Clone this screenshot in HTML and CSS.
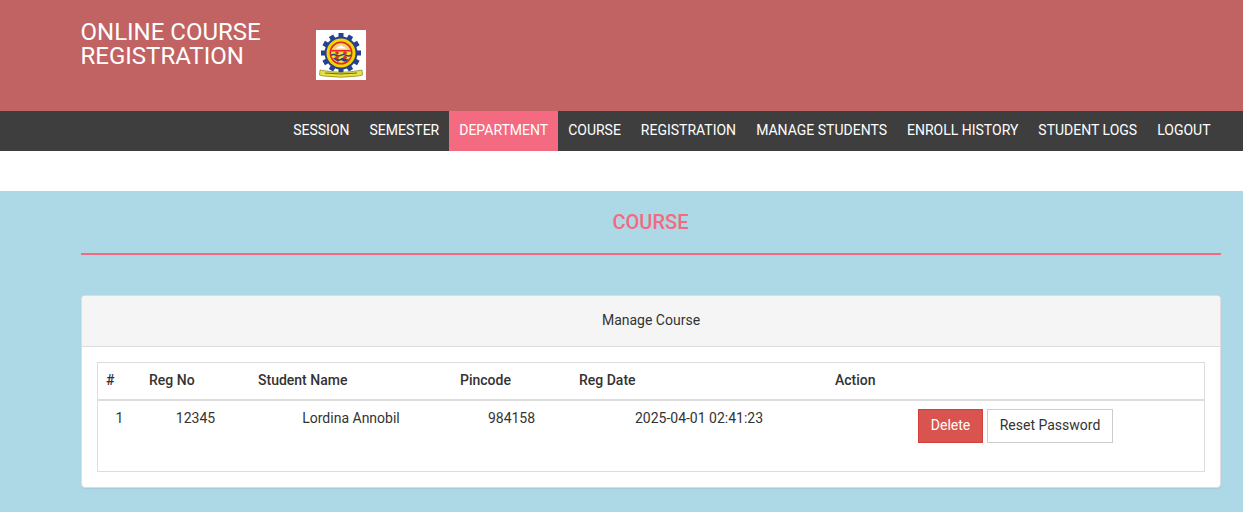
FILE: index.html
```html
<!DOCTYPE html>
<html lang="en">
<head>
<meta charset="utf-8">
<title>Online Course Registration</title>
<link rel="stylesheet" href="styles.css">
</head>
<body>
<header class="site-header">
  <h1 class="brand">ONLINE COURSE<br>REGISTRATION</h1>
  <svg class="logo" viewBox="0 0 50 50" width="50" height="50" aria-label="Logo">
    <rect width="50" height="50" fill="#fff"/>
    <g fill="#24408e">
      <circle cx="25" cy="23" r="16.500"/>
      <g id="t">
        <rect x="22.500" y="3" width="5" height="5"/>
        <rect x="22.500" y="38" width="5" height="5"/>
        <rect x="5" y="20.500" width="5" height="5"/>
        <rect x="40" y="20.500" width="5" height="5"/>
      </g>
      <use href="#t" transform="rotate(30 25 23)"/>
      <use href="#t" transform="rotate(60 25 23)"/>
    </g>
    <circle cx="25" cy="23" r="14.500" fill="#f5d400"/>
    <circle cx="25" cy="23" r="11.500" fill="#e0262a"/>
    <circle cx="25" cy="23" r="10" fill="#f7dc2c"/>
    <path d="M17 18.500q8-8 16 0z" fill="#f3c9c4"/>
    <path d="M19.500 18.500l5.500-3 5.500 3z" fill="#fff"/>
    <path d="M15.500 20h19l.5 1.500H15z" fill="#e0262a"/>
    <path d="M15 24.500q2.500-1.500 5 0t5 0 5 0 5 0v1.500q-2.500 1.500-5 0t-5 0-5 0-5 0z" fill="#24408e"/>
    <path d="M17 28.500q2-1.500 4 0t4 0 4 0 4 0l-2 2.500q-2 1.500-4 0t-4 0-2 0z" fill="#24408e"/>
    <circle cx="21" cy="23" r="1.800" fill="#c8362c"/><circle cx="29" cy="23" r="1.800" fill="#c8362c"/>
    <circle cx="21" cy="27.500" r="1.800" fill="#c8362c"/><circle cx="29" cy="27.500" r="1.800" fill="#c8362c"/>
    <path d="M4 40l3 .5q18 3.500 36 0l3-.5.500 5-4 1q-18 2.500-35 0l-4-1z" fill="#e6e23c" stroke="#6d6d1e" stroke-width=".6"/>
    <path d="M9 43q16 2 32 0" fill="none" stroke="#5c5c28" stroke-width=".9"/>
  </svg>
</header>
<nav class="main-nav">
  <a href="#">Session</a>
  <a href="#">Semester</a>
  <a href="#" class="active">Department</a>
  <a href="#">Course</a>
  <a href="#">Registration</a>
  <a href="#">Manage Students</a>
  <a href="#">Enroll History</a>
  <a href="#">Student Logs</a>
  <a href="#">Logout</a>
</nav>
<main class="content">
  <h2 class="page-title">COURSE</h2>
  <section class="panel">
    <div class="panel-heading">Manage Course</div>
    <div class="panel-body">
      <table class="data-table">
        <colgroup>
          <col class="c1"><col class="c2"><col class="c3"><col class="c4"><col class="c5"><col class="c6">
        </colgroup>
        <thead>
          <tr><th>#</th><th>Reg No</th><th>Student Name</th><th>Pincode</th><th>Reg Date</th><th>Action</th></tr>
        </thead>
        <tbody>
          <tr>
            <td>1</td><td>12345</td><td>Lordina Annobil</td><td>984158</td><td>2025-04-01 02:41:23</td>
            <td class="actions"><button class="btn btn-danger">Delete</button> <button class="btn btn-reset">Reset Password</button></td>
          </tr>
        </tbody>
      </table>
    </div>
  </section>
</main>
</body>
</html>
```
FILE: styles.css
```css
* { box-sizing: border-box; }
html, body { margin: 0; padding: 0; }
body {
  font-family: Roboto, "Liberation Sans", sans-serif;
  font-size: 14px;
  line-height: 20px;
  color: #333;
  background: #fff;
  overflow: hidden;
}
.site-header {
  height: 111px;
  background: #c26363;
  padding: 20px 0 0 80.5px;
  display: flex;
  align-items: flex-start;
}
.brand {
  margin: 0;
  width: 235.5px;
  font-size: 24px;
  line-height: 24px;
  font-weight: 400;
  color: #fff;
}
.logo { display: block; margin-top: 10px; }
.main-nav {
  height: 40px;
  background: #3e3e3e;
  display: flex;
  justify-content: flex-end;
  padding-right: 22.5px;
}
.main-nav a {
  padding: 9px 10px 11px;
  color: #fff;
  text-decoration: none;
  text-transform: uppercase;
  line-height: 20px;
}
.main-nav a.active { background: #f46a80; }
.content {
  margin-top: 40px;
  background: #add8e6;
  padding: 20px 22px 24px 81px;
}
.page-title {
  margin: 0 0 40px;
  height: 44px;
  padding-right: 1px;
  border-bottom: 2px solid #f46a80;
  text-align: center;
  font-size: 20px;
  line-height: 22px;
  font-weight: 500;
  color: #f46a80;
}
.panel {
  background: #fff;
  border: 1px solid #ddd;
  border-radius: 4px;
  box-shadow: 0 1px 1px rgba(0,0,0,.05);
}
.panel-heading {
  height: 51px;
  padding: 14px 15px;
  background: #f5f5f5;
  border-bottom: 1px solid #ddd;
  border-radius: 3px 3px 0 0;
  text-align: center;
}
.panel-body { padding: 15px; }
.data-table {
  width: 100%;
  table-layout: fixed;
  border-collapse: collapse;
  border: 1px solid #ddd;
}
.c1 { width: 43.5px; }
.c2 { width: 109px; }
.c3 { width: 202px; }
.c4 { width: 119px; }
.c5 { width: 256px; }
.data-table th {
  padding: 7px 8px 9px;
  text-align: left;
  font-weight: 500;
  border-bottom: 2px solid #ddd;
  height: 37px;
}
.data-table td {
  padding: 7px 8px;
  text-align: center;
  vertical-align: top;
  height: 71px;
}
.data-table td.actions { padding-top: 8px; }
.btn {
  display: inline-block;
  height: 34px;
  padding: 5px 0 7px;
  font: inherit;
  color: #333;
  background: #fff;
  border: 1px solid #ccc;
}
.btn-danger {
  width: 65px;
  color: #fff;
  background: #d9534f;
  border-color: #d43f3a;
}
.btn-reset { width: 126px; margin-left: 0.5px; }
```
